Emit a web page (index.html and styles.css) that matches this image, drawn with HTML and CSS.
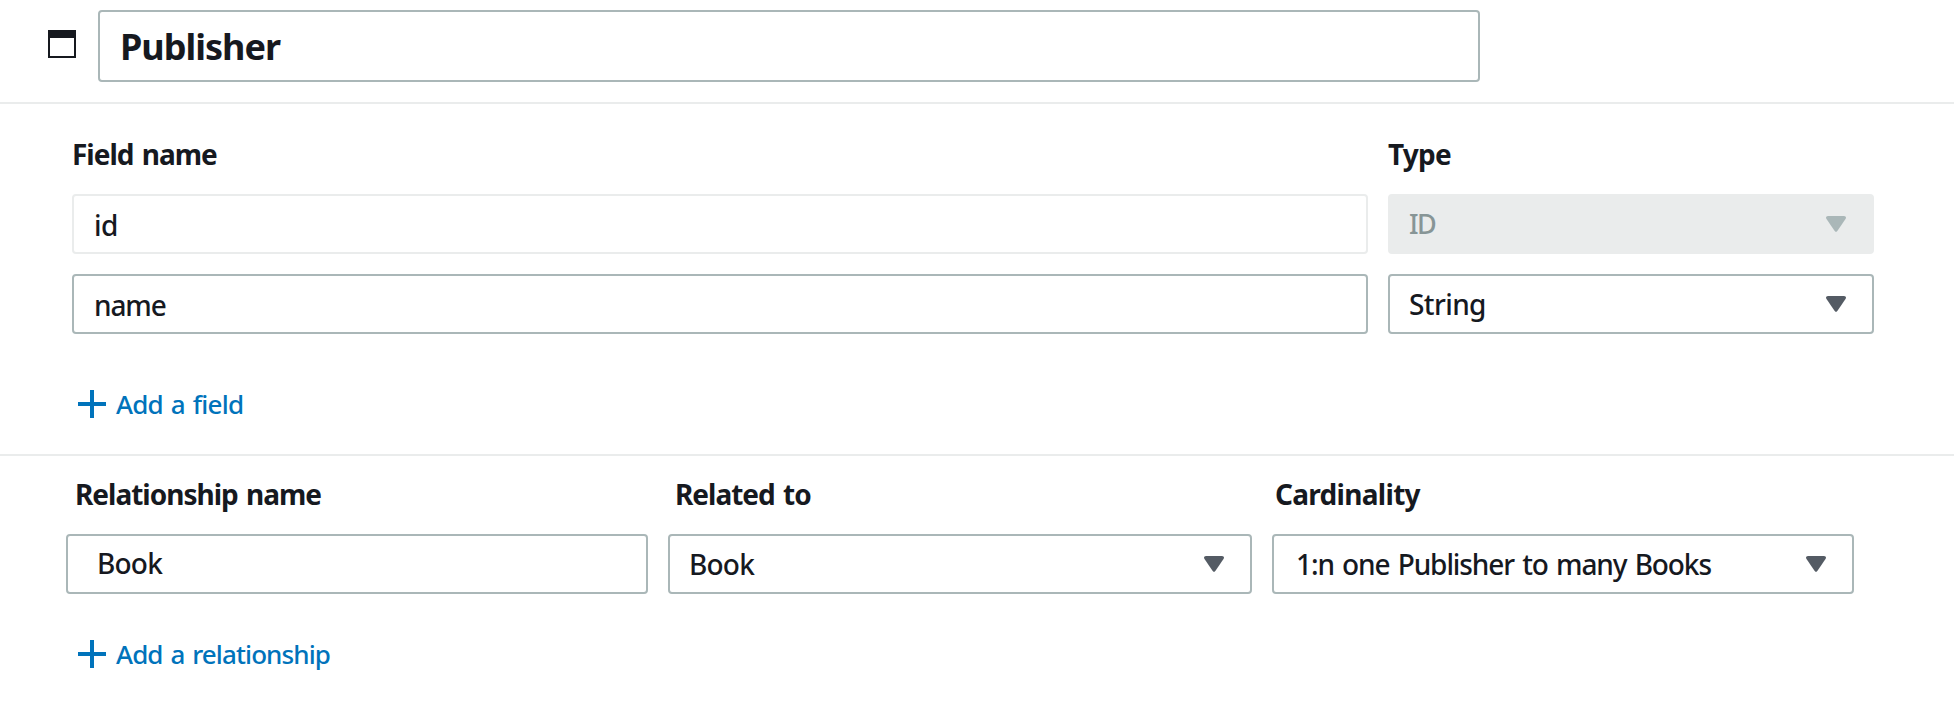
FILE: index.html
```html
<!DOCTYPE html>
<html lang="en">
<head>
<meta charset="utf-8">
<title>Publisher</title>
<link rel="stylesheet" href="styles.css">
</head>
<body>
<header class="header">
  <svg class="table-icon" viewBox="0 0 28 28"><rect x="1" y="1" width="26" height="26" fill="none" stroke="#16191f" stroke-width="2"/><rect width="28" height="8" fill="#16191f"/></svg>
  <div class="title">Publisher</div>
</header>
<section class="fields">
  <div class="grid">
    <div class="label">Field name</div>
    <div class="label type">Type</div>
    <div class="box readonly input"><span class="id">id</span></div>
    <div class="box select disabled"><span class="idtype">ID</span><svg class="caret" viewBox="0 0 20 16"><path d="M2 0H18Q21 .3 19.5 3L11.5 14.8Q10 17 8.500 14.8L.5 3Q-1 .3 2 0Z"/></svg></div>
    <div class="box input"><span class="name">name</span></div>
    <div class="box select"><span class="string">String</span><svg class="caret" viewBox="0 0 20 16"><path d="M2 0H18Q21 .3 19.5 3L11.5 14.8Q10 17 8.500 14.8L.5 3Q-1 .3 2 0Z"/></svg></div>
  </div>
  <a class="add"><svg class="plus" viewBox="0 0 28 28"><path d="M12 0h4v12h12v4H16v12h-4V16H0v-4h12z"/></svg><span class="add-field">Add a field</span></a>
</section>
<section class="relations">
  <div class="grid">
    <div class="label rel-name">Relationship name</div>
    <div class="label rel-to">Related to</div>
    <div class="label cardinality">Cardinality</div>
    <div class="box rel-input"><span class="book">Book</span></div>
    <div class="box select"><span class="book">Book</span><svg class="caret" viewBox="0 0 20 16"><path d="M2 0H18Q21 .3 19.5 3L11.5 14.8Q10 17 8.500 14.8L.5 3Q-1 .3 2 0Z"/></svg></div>
    <div class="box select wide"><span>1:n one Publisher to many Books</span><svg class="caret" viewBox="0 0 20 16"><path d="M2 0H18Q21 .3 19.5 3L11.5 14.8Q10 17 8.500 14.8L.5 3Q-1 .3 2 0Z"/></svg></div>
  </div>
  <a class="add"><svg class="plus" viewBox="0 0 28 28"><path d="M12 0h4v12h12v4H16v12h-4V16H0v-4h12z"/></svg><span>Add a relationship</span></a>
</section>
</body>
</html>
```
FILE: styles.css
```css
* { box-sizing: border-box; }
body {
  margin: 0;
  min-height: 718px;
  background: #fff;
  color: #16191f;
  font: 500 28px/36px "Noto Sans", sans-serif;
  letter-spacing: -1.1px;
  word-spacing: 2px;
  white-space: nowrap;
}
svg { display: block; flex: none; }
.header {
  display: flex;
  gap: 22px;
  height: 104px;
  padding: 10px 0 0 48px;
  border-bottom: 2px solid #eaecec;
}
.table-icon { width: 28px; height: 28px; margin-top: 20px; }
.title {
  width: 1382px;
  height: 72px;
  padding-left: 20px;
  border: 2px solid #aab7b8;
  border-radius: 4px;
  font-size: 36px;
  font-weight: 700;
  letter-spacing: -1px;
  line-height: 70px;
}
.grid { display: grid; column-gap: 20px; row-gap: 20px; }
.fields { padding: 32px 0 36px 72px; border-bottom: 2px solid #eaecec; }
.fields .grid { grid-template-columns: 1296px 486px; }
.relations { padding: 20px 0 0 66px; }
.relations .grid { grid-template-columns: 582px 584px 582px; }
.label { margin-bottom: 2px; font-weight: 700; letter-spacing: -1px; }
.type { letter-spacing: -0.8px; }
.rel-name { padding-left: 9px; }
.rel-to { padding-left: 7px; }
.cardinality { padding-left: 3px; letter-spacing: -0.7px; }
.box {
  display: flex;
  align-items: center;
  justify-content: space-between;
  height: 60px;
  padding: 0 26px 0 19px;
  border: 2px solid #aab7b8;
  border-radius: 4px;
}
.input { padding: 2px 0 0 20px; }
.readonly { border-color: #eaecec; }
.rel-input { padding: 0 0 2px 29px; }
.select > span { margin-top: -1px; }
.wide { padding-left: 22px; }
.disabled { background: #eaecec; border-color: #eaecec; color: #879596; }
.caret { width: 20px; height: 16px; fill: #545b64; }
.disabled .caret { fill: #aab7b8; }
.id { letter-spacing: -0.6px; }
.idtype { font-size: 27px; letter-spacing: -1.5px; }
.string { letter-spacing: -0.6px; }
.book { letter-spacing: -0.8px; }
.add {
  display: flex;
  align-items: center;
  gap: 10px;
  width: max-content;
  height: 28px;
  color: #0073bb;
  font-size: 26px;
  letter-spacing: -0.9px;
}
.plus { width: 28px; height: 28px; fill: #0073bb; }
.add-field { letter-spacing: -0.8px; }
.fields .add { margin: 56px 0 0 6px; }
.relations .add { margin: 46px 0 0 12px; }
```
